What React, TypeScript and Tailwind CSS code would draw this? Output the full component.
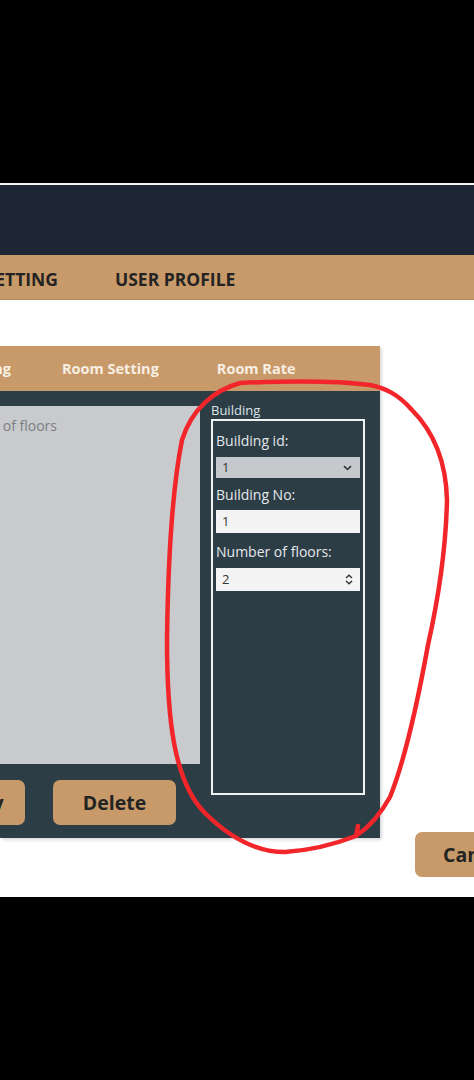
import React from 'react';

const font = { fontFamily: '"Open Sans", "Liberation Sans", sans-serif' };

const Label: React.FC<{ children: React.ReactNode; className?: string }> = ({ children, className }) => (
  <span className={`text-[14px] leading-[20px] text-[#e4e8ea] ${className ?? ''}`}>{children}</span>
);

export default function App() {
  return (
    <div className="relative w-[474px] h-[1080px] bg-black overflow-hidden" style={font}>
      <div className="h-[183px]" />
      <div className="h-[2px] bg-[#f4f4f4]" />
      {/* top header */}
      <div className="h-[70px] bg-[#1d2733]" />
      {/* main nav */}
      <div className="h-[45px] bg-[#c89a69] border-b border-[#b08a64] flex items-center pt-[4px] text-[17.5px] font-bold text-[#232323]">
        <div className="w-[58px] flex justify-end overflow-hidden whitespace-nowrap">SETTING</div>
        <div className="ml-[57px] whitespace-nowrap">USER PROFILE</div>
      </div>

      {/* page body */}
      <div className="h-[597px] bg-white flex">
        <div className="flex flex-col pt-[46px]">
          <div className="w-[380px] flex flex-col shadow-[2px_2px_3px_rgba(0,0,0,0.15)]">
            {/* tabs */}
            <div className="h-[45px] bg-[#c89a69] flex items-center text-[14.5px] font-bold text-[#f7efe3]">
              <div className="w-[11px] flex justify-end overflow-hidden whitespace-nowrap">Building Setting</div>
              <div className="ml-[51px] whitespace-nowrap">Room Setting</div>
              <div className="ml-[58px] whitespace-nowrap">Room Rate</div>
            </div>
            {/* tab content */}
            <div className="h-[447px] bg-[#2c3d46] flex flex-col pt-[15px]">
              <div className="flex gap-[11px]">
                <div className="w-[200px] h-[358px] bg-[#c8cacd] pt-[9px]">
                  <div className="w-[57px] flex justify-end overflow-hidden whitespace-nowrap text-[14px] text-[#7d8083]">Number of floors</div>
                </div>
                <div className="w-[154px] -mt-[5px] flex flex-col">
                  <span className="text-[13px] leading-[18px] text-[#dde3e6]">Building</span>
                  <div className="h-[376px] border-2 border-[#eef2f3] px-[3px] pt-[10px] flex flex-col">
                    <Label>Building id:</Label>
                    <div className="mt-[6px] h-[21px] bg-[#c6c9cc] flex items-center justify-between px-[6px] text-[13px] text-[#333]">
                      <span>1</span>
                      <svg width="9" height="6" viewBox="0 0 9 6" className="mr-[2px]">
                        <path d="M1 1.2 L4.5 4.5 L8 1.2" stroke="#333" strokeWidth="1.6" fill="none" />
                      </svg>
                    </div>
                    <Label className="mt-[7px]">Building No:</Label>
                    <div className="mt-[5px] h-[23px] bg-[#f4f4f4] flex items-center px-[6px] text-[13px] text-[#333]">1</div>
                    <Label className="mt-[9px]">Number of floors:</Label>
                    <div className="mt-[6px] h-[23px] bg-[#f4f4f4] flex items-center justify-between px-[6px] text-[13px] text-[#333]">
                      <span>2</span>
                      <svg width="8" height="11" viewBox="0 0 8 11" className="mr-[1px]">
                        <path d="M1 4 L4 1.2 L7 4 M1 7 L4 9.8 L7 7" stroke="#333" strokeWidth="1.4" fill="none" />
                      </svg>
                    </div>
                  </div>
                </div>
              </div>
              <div className="flex gap-[28px] -mt-[15px]">
                <button className="ml-[-85px] w-[110px] h-[45px] rounded-[7px] bg-[#c89a69] text-[19.5px] font-bold text-[#232323]">Modify</button>
                <button className="w-[123px] h-[45px] rounded-[7px] bg-[#c89a69] text-[19.5px] font-bold text-[#232323]">Delete</button>
              </div>
            </div>
          </div>
        </div>
        {/* right side */}
        <div className="flex-1 flex flex-col items-end">
          <div className="mt-[220px] w-[11px] h-[140px] rounded-l-[10px] border border-r-0 border-[#d4d4d4] shadow-[-1px_1px_3px_rgba(0,0,0,0.1)]" />
          <button className="mt-[172px] ml-[35px] self-start w-[80px] h-[45px] rounded-l-[7px] bg-[#c89a69] text-[19.5px] font-bold text-[#232323] text-left pl-[28px] whitespace-nowrap overflow-hidden">Cancel</button>
        </div>
      </div>

      {/* red hand-drawn annotation */}
      <svg className="absolute inset-0 pointer-events-none" width="474" height="1080" viewBox="0 0 474 1080">
        <path
          d="M358,826 L356,836 C368,828 380,815 390,797 C405,760 418,700 428,645 C438,600 446,545 447,500 C446,460 432,430 412,410 C398,394 385,388 370,385 C330,380 285,381 240,383 C215,390 192,408 182,440 C172,490 168,560 167,640 C167,720 174,782 205,813 C230,838 258,852 285,852 C315,850 338,843 356,836"
          stroke="#f2262a"
          strokeWidth="4.5"
          fill="none"
          strokeLinecap="round"
          strokeLinejoin="round"
        />
      </svg>
    </div>
  );
}
